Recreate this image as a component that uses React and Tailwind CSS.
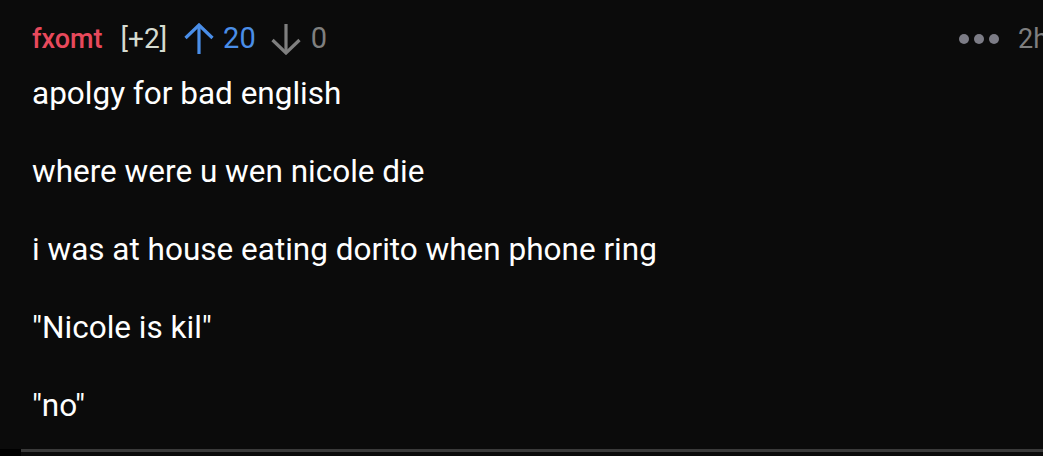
import React from 'react';

const lines = [
  'apolgy for bad english',
  'where were u wen nicole die',
  'i was at house eating dorito when phone ring',
  '"Nicole is kil"',
  '"no"',
];

const Arrow = ({ down, className }) => (
  <svg
    viewBox="0 0 30 32"
    className={className}
    fill="none"
    stroke="currentColor"
    strokeWidth="3.2"
    strokeLinecap="butt"
    strokeLinejoin="miter"
  >
    {down ? (
      <>
        <path d="M15 1 V30" />
        <path d="M1.5 17 L15 30 L28.5 17" />
      </>
    ) : (
      <>
        <path d="M15 31 V2" />
        <path d="M1.5 15 L15 2 L28.5 15" />
      </>
    )}
  </svg>
);

const App = () => {
  return (
    <div
      className="w-[1043px] h-[456px] bg-[#0b0b0b] overflow-hidden flex flex-col"
      style={{ fontFamily: 'Roboto, "Liberation Sans", sans-serif' }}
    >
      {/* Header */}
      <div className="flex items-center h-[40px] mt-[19px] pl-[32px] whitespace-nowrap shrink-0">
        <span className="text-[27px] text-[#e8495c] font-medium">fxomt</span>
        <span className="text-[28px] text-[#d6dbd0] ml-[18px]">[+2]</span>
        <Arrow className="w-[30px] h-[32px] text-[#4a8ee8] ml-[17px]" />
        <span className="text-[29px] text-[#4a8ee8] ml-[9px]">20</span>
        <Arrow down className="w-[30px] h-[32px] text-[#7f7f7f] ml-[15px]" />
        <span className="text-[29px] text-[#7f7f7f] ml-[10px]">0</span>
        <div className="flex items-center gap-[5px] ml-auto">
          <span className="w-[10px] h-[10px] rounded-full bg-[#7c7c86]" />
          <span className="w-[10px] h-[10px] rounded-full bg-[#7c7c86]" />
          <span className="w-[10px] h-[10px] rounded-full bg-[#7c7c86]" />
        </div>
        <span className="text-[27px] text-[#7f7f7f] ml-[19px] -mr-[5px]">2h</span>
      </div>

      {/* Body */}
      <div className="pl-[32px] mt-[15px] h-[375px] overflow-hidden shrink-0">
        {lines.map((line) => (
          <p key={line} className="text-[31.5px] text-white leading-[40px] mb-[38px]">
            {line}
          </p>
        ))}
      </div>

      {/* Bottom rule */}
      <div className="flex flex-1">
        <div className="w-[21px] bg-black" />
        <div className="flex-1 flex flex-col">
          <div className="h-[3px] bg-[#3a3a3a]" />
          <div className="flex-1 bg-[#0b0b0b]" />
        </div>
      </div>
    </div>
  );
};

export default App;
